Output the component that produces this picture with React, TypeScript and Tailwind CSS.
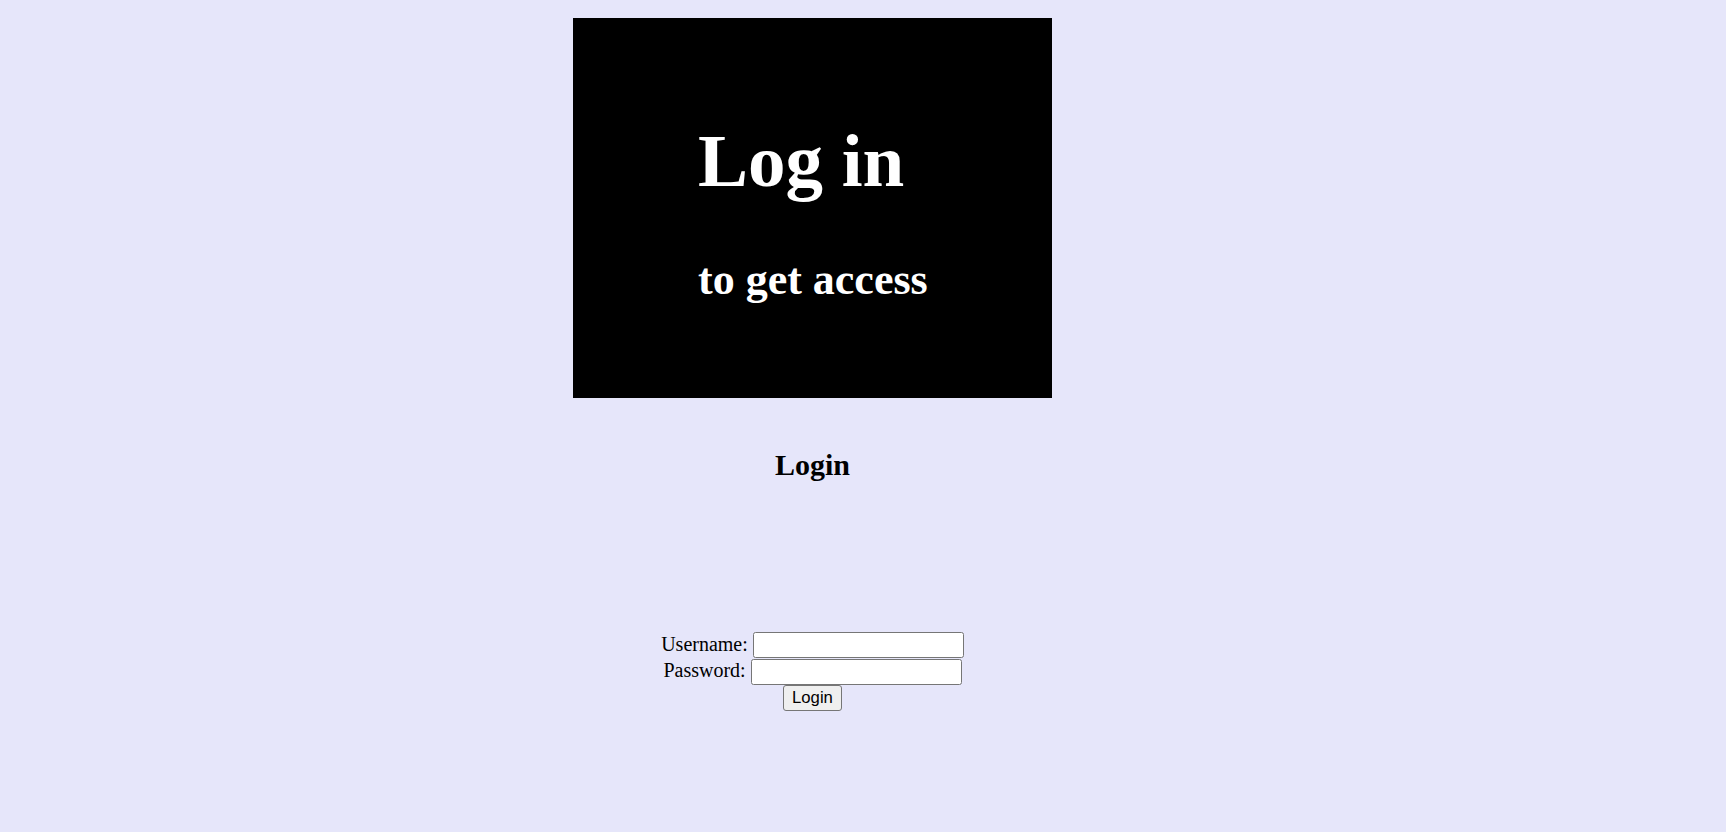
export default function App() {
  return (
    <div className="min-h-screen w-full bg-[#e6e6fa] text-black font-['Liberation_Serif','Times_New_Roman',serif]">
      <div className="w-[1625px] flex flex-col items-center pt-[18px]">
        <div className="w-[479px] h-[380px] bg-black text-white flex flex-col pl-[125px] pt-[105px]">
          <h1 className="text-[75px] font-bold leading-none">Log in</h1>
          <p className="mt-[60px] text-[44px] font-bold leading-none">to get access</p>
        </div>

        <h2 className="mt-[52px] text-[30px] font-bold leading-none">Login</h2>

        <form className="mt-[152px] flex flex-col items-center gap-[0.5px] text-[20px]">
          <div className="flex items-center h-[26px] gap-[5px]">
            <label htmlFor="username" className="leading-none mb-[3px]">Username:</label>
            <input
              id="username"
              type="text"
              className="w-[211px] h-[26px] bg-white border border-[#767676] rounded-[2.5px] px-[2px] text-[16.7px] font-['Liberation_Sans',Arial,sans-serif]"
            />
          </div>
          <div className="flex items-center h-[26px] gap-[5px]">
            <label htmlFor="password" className="leading-none mb-[3px]">Password:</label>
            <input
              id="password"
              type="password"
              className="w-[211px] h-[26px] bg-white border border-[#767676] rounded-[2.5px] px-[2px] text-[16.7px] font-['Liberation_Sans',Arial,sans-serif]"
            />
          </div>
          <button
            type="button"
            className="w-[59px] h-[26px] bg-[#efefef] border border-[#767676] rounded-[3px] text-[16.7px] leading-none font-['Liberation_Sans',Arial,sans-serif]"
          >
            Login
          </button>
        </form>
      </div>
    </div>
  );
}
